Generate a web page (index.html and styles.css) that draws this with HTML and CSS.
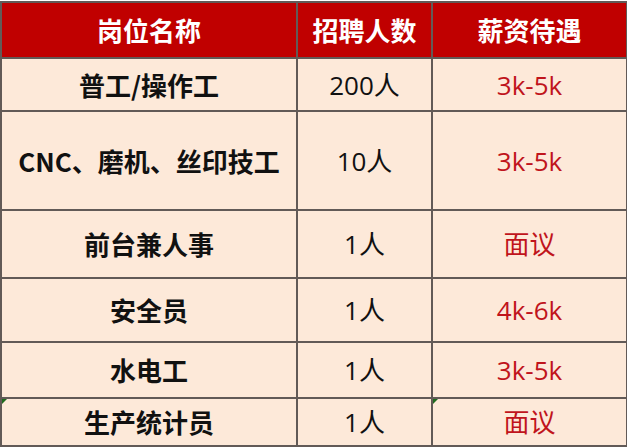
FILE: index.html
```html
<!DOCTYPE html>
<html lang="zh-CN">
<head>
<meta charset="utf-8">
<title>招聘岗位</title>
<link rel="stylesheet" href="styles.css">
</head>
<body>
<div class="wrap">
<table class="jobs">
  <colgroup>
    <col class="c-name">
    <col class="c-num">
    <col class="c-pay">
  </colgroup>
  <thead>
    <tr class="r-head">
      <th>岗位名称</th>
      <th>招聘人数</th>
      <th>薪资待遇</th>
    </tr>
  </thead>
  <tbody>
    <tr class="r1">
      <td class="name">普工/操作工</td>
      <td class="num">200人</td>
      <td class="pay">3k-5k</td>
    </tr>
    <tr class="r2">
      <td class="name">CNC、磨机、丝印技工</td>
      <td class="num">10人</td>
      <td class="pay">3k-5k</td>
    </tr>
    <tr class="r3">
      <td class="name">前台兼人事</td>
      <td class="num">1人</td>
      <td class="pay">面议</td>
    </tr>
    <tr class="r4">
      <td class="name">安全员</td>
      <td class="num">1人</td>
      <td class="pay">4k-6k</td>
    </tr>
    <tr class="r5">
      <td class="name">水电工</td>
      <td class="num">1人</td>
      <td class="pay">3k-5k</td>
    </tr>
    <tr class="r6">
      <td class="name flag">生产统计员</td>
      <td class="num">1人</td>
      <td class="pay flag">面议</td>
    </tr>
  </tbody>
</table>
</div>
</body>
</html>
```

FILE: styles.css
```css
html, body {
  margin: 0;
  padding: 0;
  background: #ffffff;
}

.wrap {
  padding: 1px 0 0 0;
}

.jobs {
  border-collapse: collapse;
  table-layout: fixed;
  width: 626px;
  font-family: "Open Sans", "Noto Sans CJK SC", sans-serif;
  font-size: 26px;
}

.c-name { width: 296px; }
.c-num { width: 135px; }
.c-pay { width: 195px; }

.jobs th,
.jobs td {
  border: 2px solid #625a57;
  padding: 0;
  text-align: center;
  vertical-align: middle;
  line-height: 1;
}

.jobs th {
  background: #c00000;
  color: #ffffff;
  font-weight: bold;
  font-family: "Noto Sans CJK SC", sans-serif;
}

.jobs td {
  background: #fde9d9;
}

.name {
  font-weight: bold;
  color: #111111;
  font-family: "Noto Sans CJK SC", sans-serif;
}

.num {
  color: #111111;
}

.pay {
  color: #c0141c;
}

.r-head th { height: 54px; }
.r1 td { height: 51px; }
.r2 td { height: 97px; }
.r3 td { height: 66px; }
.r4 td { height: 62px; }
.r5 td { height: 54px; }
.r6 td { height: 46px; }

.flag {
  position: relative;
}

.flag::before {
  content: "";
  position: absolute;
  left: 0;
  top: 0;
  width: 0;
  height: 0;
  border-top: 5px solid #1f6b1f;
  border-right: 5px solid transparent;
}
```
